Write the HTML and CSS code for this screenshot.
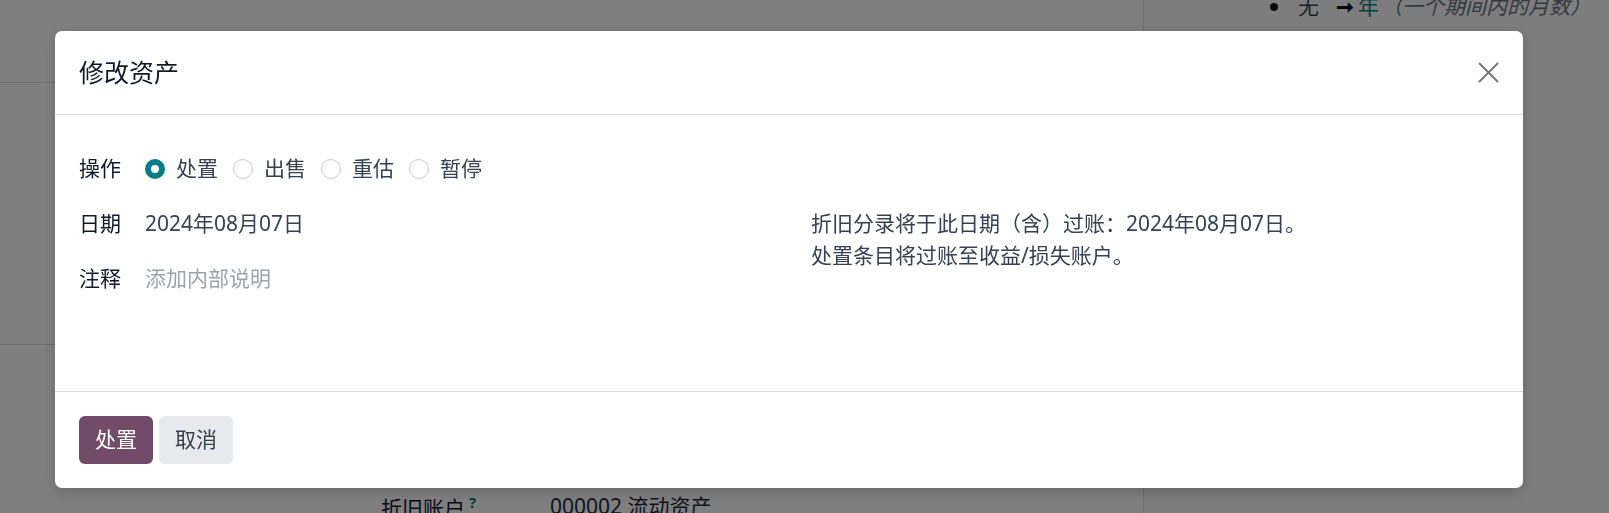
FILE: index.html
```html
<!DOCTYPE html>
<html lang="zh-CN">
<head>
  <meta charset="UTF-8" />
  <title>修改资产</title>
  <link rel="stylesheet" href="styles.css">
</head>
<body>
  <!-- ======= Страница под модалкой ======= -->
  <div class="page">
    <div class="main">
      <div class="main-top"></div>
      <div class="main-mid"></div>
      <div class="main-body">
        <div class="field-label">折旧账户<sup class="help">?</sup></div>
        <div class="field-value">000002 流动资产</div>
      </div>
    </div>
    <aside class="side">
      <div class="side-item">
        <span class="dot"></span>
        <span class="from">无</span>
        <span class="arrow">➞</span>
        <span class="link">年</span>
        <em class="hint">（一个期间内的月数）</em>
      </div>
    </aside>
  </div>

  <!-- ======= Модальное окно ======= -->
  <div class="backdrop">
    <div class="modal">
      <div class="modal-header">
        <h4 class="modal-title">修改资产</h4>
        <button class="btn-close" aria-label="Close">
          <svg width="21" height="21" viewBox="0 0 21 21">
            <path d="M1 1 L20 20 M20 1 L1 20" stroke="#777" stroke-width="2" fill="none"/>
          </svg>
        </button>
      </div>

      <div class="modal-body">
        <div class="col-left">
          <div class="row">
            <label class="label">操作</label>
            <div class="radios">
              <span class="radio checked"></span><span class="radio-text">处置</span>
              <span class="radio"></span><span class="radio-text">出售</span>
              <span class="radio"></span><span class="radio-text">重估</span>
              <span class="radio"></span><span class="radio-text">暂停</span>
            </div>
          </div>
          <div class="row">
            <label class="label">日期</label>
            <div class="value">2024年08月07日</div>
          </div>
          <div class="row">
            <label class="label">注释</label>
            <div class="value placeholder">添加内部说明</div>
          </div>
        </div>
        <div class="col-right">
          <p>折旧分录将于此日期（含）过账：2024年08月07日。<br>处置条目将过账至收益/损失账户。</p>
        </div>
      </div>

      <div class="modal-footer">
        <button class="btn btn-primary">处置</button>
        <button class="btn btn-secondary">取消</button>
      </div>
    </div>
  </div>
</body>
</html>
```

FILE: styles.css
```css
/* ======= Общие стили ======= */
body {
  margin: 0;
  font-family: "Noto Sans", "Noto Sans CJK SC", sans-serif;
  font-size: 21px;
  line-height: 1.5;
  color: #374151;
  background: #fff;
  overflow: hidden;
}

/* ======= Страница на фоне ======= */
.page {
  display: flex;
  height: 100vh;
}
.main {
  width: 1143px;
  border-right: 1px solid #dcdcdc;
}
.main-top {
  height: 82px;
  border-bottom: 1px solid #e2e2e2;
}
.main-mid {
  height: 261px;
  border-bottom: 1px solid #e2e2e2;
}
.main-body {
  display: flex;
  padding: 146px 0 0 381px;
}
.field-label {
  width: 169px;
  color: #111827;
}
.help {
  color: #017e84;
  font-weight: 700;
  font-size: 15px;
  margin-left: 4px;
}
.field-value {
  color: #1f2937;
}

.side {
  flex: 1;
  background: #fafafa;
}
.side-item {
  display: flex;
  align-items: center;
  margin-top: -9px;
  padding-left: 126px;
  color: #374151;
}
.dot {
  width: 8px;
  height: 8px;
  border-radius: 50%;
  background: #111;
  margin-right: 20px;
}
.from {
  margin-right: 17px;
}
.arrow {
  color: #111;
  font-weight: 700;
  margin-right: 4px;
}
.link {
  color: #017e84;
  margin-right: 2px;
}
.hint {
  color: #6b7280;
}

/* ======= Модалка ======= */
.backdrop {
  position: fixed;
  inset: 0;
  background: rgba(0, 0, 0, 0.5);
}
.modal {
  margin: 31px 0 0 55px;
  width: 1468px;
  background: #fff;
  border-radius: 7px;
  box-shadow: 0 4px 14px rgba(0, 0, 0, 0.18);
}
.modal-header {
  height: 84px;
  box-sizing: border-box;
  padding: 0 24px;
  display: flex;
  align-items: center;
  justify-content: space-between;
  border-bottom: 1px solid #d8dadd;
}
.modal-title {
  margin: 0;
  font-size: 25px;
  font-weight: 400;
  color: #111827;
}
.btn-close {
  background: none;
  border: none;
  padding: 0;
  width: 21px;
  height: 21px;
  cursor: pointer;
}
.btn-close svg {
  display: block;
}

.modal-body {
  height: 276px;
  box-sizing: border-box;
  padding: 26px 24px 0;
  display: grid;
  grid-template-columns: 732px 1fr;
}
.row {
  display: grid;
  grid-template-columns: 66px 1fr;
  align-items: center;
  height: 55px;
}
.label {
  color: #111827;
}
.value {
  color: #374151;
}
.placeholder {
  color: #9ca3af;
}

/* ======= Радио-кнопки ======= */
.radios {
  display: flex;
  align-items: center;
}
.radio {
  width: 20px;
  height: 20px;
  box-sizing: border-box;
  border: 1px solid #c7c9cc;
  border-radius: 50%;
  background: #fff;
  margin-right: 11px;
}
.radio.checked {
  border: 6px solid #017e84;
}
.radio-text {
  margin-right: 15px;
  color: #374151;
}

.col-right {
  padding-top: 67px;
}
.col-right p {
  margin: 0;
  color: #374151;
}

/* ======= Подвал ======= */
.modal-footer {
  border-top: 1px solid #d8dadd;
  padding: 24px;
  display: flex;
  gap: 6px;
}
.btn {
  font: inherit;
  height: 48px;
  padding: 0 16px;
  border: none;
  border-radius: 6px;
  cursor: pointer;
}
.btn-primary {
  background: #714b67;
  color: #fff;
}
.btn-secondary {
  background: #e7e9ed;
  color: #374151;
}
```
